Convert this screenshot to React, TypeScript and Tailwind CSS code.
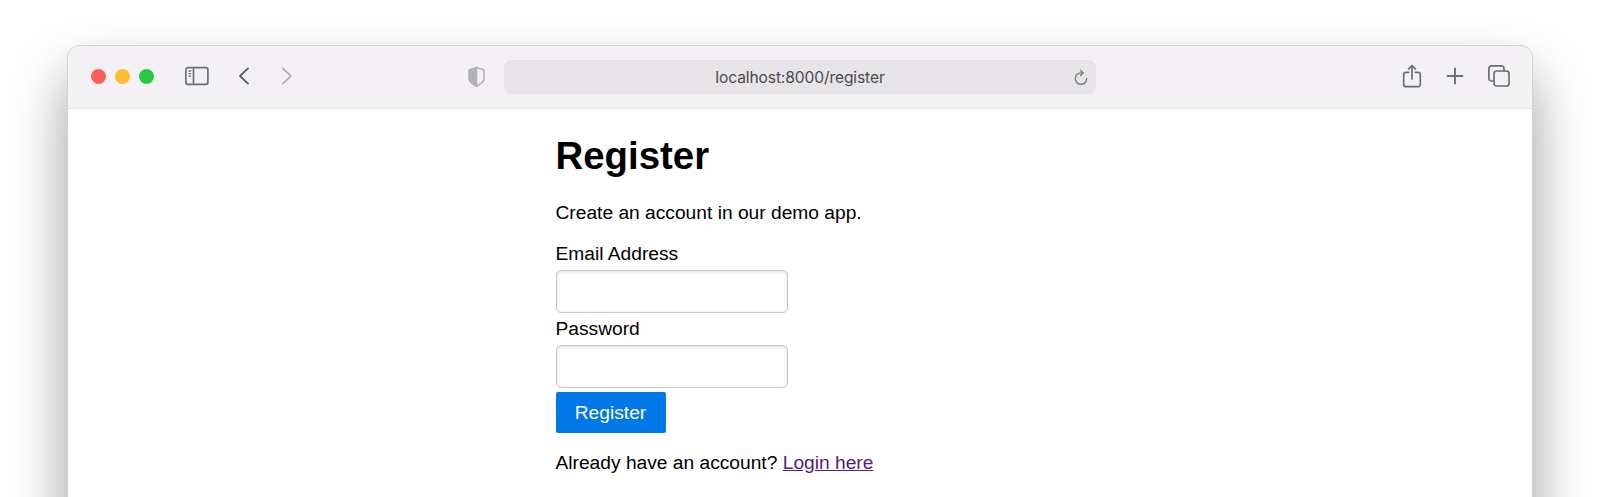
import React from "react";

const stroke = {
  fill: "none",
  stroke: "currentColor",
  strokeLinecap: "round" as const,
  strokeLinejoin: "round" as const,
};

function SidebarIcon() {
  return (
    <svg width="24" height="20" viewBox="0 0 24 20" {...stroke} strokeWidth="1.7" className="text-[#6f6e70]">
      <rect x="0.9" y="1.7" width="22" height="16.600" rx="2" />
      <path d="M8.500 1.700v16.600" />
      <path d="M4 5h1.700M4 7.600h1.700M4 10.200h1.700" strokeWidth="1.3" />
    </svg>
  );
}

function Chevron({ forward = false }: { forward?: boolean }) {
  return (
    <svg
      width="12"
      height="20"
      viewBox="0 0 12 20"
      {...stroke}
      strokeWidth="1.9"
      className={forward ? "text-[#b5b3b7]" : "text-[#5f5e60]"}
    >
      <path d={forward ? "M1.800 2.400 9.800 10 1.800 17.600" : "M10 2.400 2 10 10 17.600"} />
    </svg>
  );
}

function ShieldIcon() {
  return (
    <svg width="18" height="22" viewBox="0 0 18 22" {...stroke} strokeWidth="1.6" className="text-[#b3b1b4]">
      <path d="M8.500 1.400C6.500 2.500 4 3.300 1.600 3.600 1.200 3.700 1 4 1 4.400v8.100c0 3.800 4.200 6 7.500 7.700z" fill="currentColor" />
      <path d="M8.500 1.400c2 1.100 4.500 1.900 6.900 2.200.4.1.6.400.6.800v8.100c0 3.800-4.200 6-7.500 7.700" />
    </svg>
  );
}

function ReloadIcon() {
  return (
    <svg width="14" height="17" viewBox="0 0 14 17" {...stroke} strokeWidth="1.400" className="text-[#7d7c7e]">
      <path d="M12.700 9.600A5.700 5.700 0 1 1 7 3.900h2" />
      <path d="M6.600 1.400 9.200 3.900 6.600 6.500" />
    </svg>
  );
}

function ShareIcon() {
  return (
    <svg width="20" height="24" viewBox="0 0 20 24" {...stroke} strokeWidth="1.700" className="text-[#6f6e70]">
      <path d="M6.700 8.300H4a2.300 2.300 0 0 0-2.300 2.300v9.800A2.300 2.300 0 0 0 4 22.700h12a2.300 2.300 0 0 0 2.300-2.300v-9.800A2.300 2.300 0 0 0 16 8.300h-2.700" />
      <path d="M10 15V1.500M6.600 4.900 10 1.500l3.400 3.400" />
    </svg>
  );
}

function PlusIcon() {
  return (
    <svg width="18" height="18" viewBox="0 0 18 18" {...stroke} strokeWidth="1.900" className="text-[#6f6e70]">
      <path d="M9 1.500v15M1.500 9h15" />
    </svg>
  );
}

function TabsIcon() {
  return (
    <svg width="22" height="22" viewBox="0 0 22 22" {...stroke} strokeWidth="1.700" className="text-[#6f6e70]">
      <rect x="6" y="6" width="15" height="15" rx="2.600" />
      <path d="M6 16H3.500A2.600 2.600 0 0 1 .9 13.400V3.500A2.600 2.600 0 0 1 3.500.9h9.900A2.600 2.600 0 0 1 16 3.500V5.800" />
    </svg>
  );
}

function Toolbar() {
  return (
    <header className="flex h-[63px] items-center border-b border-[#e3e1e4] bg-[#f3f1f4] pl-[23px] pr-[22px]">
      <div className="flex w-[377px] shrink-0 items-center">
        <div className="flex gap-[9px] pb-px">
          <span className="size-[15px] rounded-full bg-[#ff5f57]" />
          <span className="size-[15px] rounded-full bg-[#febc2e]" />
          <span className="size-[15px] rounded-full bg-[#28c840]" />
        </div>
        <div className="ml-[31px] flex items-center pb-[2px]">
          <SidebarIcon />
        </div>
        <div className="ml-[29px] flex gap-[31px] pb-[2px]">
          <Chevron />
          <Chevron forward />
        </div>
      </div>
      <div className="pb-px">
        <ShieldIcon />
      </div>
      <div className="ml-[18px] flex h-[34px] w-[592px] items-center rounded-[7px] bg-[#e6e4e7] pr-[8px]">
        <span className="ml-[22px] flex-1 pt-[2px] text-center font-['Inter'] text-[15.6px] leading-5 tracking-[-0.12px] text-[#4c4a4e]">
          localhost:8000/register
        </span>
        <ReloadIcon />
      </div>
      <div className="ml-auto flex items-center pb-[2px]">
        <ShareIcon />
        <div className="ml-[24px]">
          <PlusIcon />
        </div>
        <div className="ml-[24px]">
          <TabsIcon />
        </div>
      </div>
    </header>
  );
}

function Field({ label, type, id }: { label: string; type: string; id: string }) {
  return (
    <div className="flex h-[74.500px] flex-col items-start">
      <label htmlFor={id} className="h-[27px]">
        {label}
      </label>
      <input
        id={id}
        type={type}
        className="h-[43px] w-[232px] rounded-[5px] border border-[#c9c9c9] bg-white px-3 shadow-[inset_0_1px_4px_#dddddd] outline-none"
      />
    </div>
  );
}

export default function App() {
  return (
    <div className="h-[497px] overflow-hidden bg-white px-[68px] pt-[46px]">
      <div className="h-[700px] overflow-hidden rounded-[12px] bg-white shadow-[0_0_0_1px_#d4d3d5,0_30px_56px_rgba(0,0,0,0.4)]">
        <Toolbar />
        <main className="ml-[487.500px] w-[490px] pt-[25px] font-['Liberation_Sans',sans-serif] text-[19.2px] leading-[22px] text-black">
          <h1 className="text-[38.4px] font-bold leading-[44px]">Register</h1>
          <p className="mt-[24px]">Create an account in our demo app.</p>
          <form className="mt-[19px]" onSubmit={(e) => e.preventDefault()}>
            <Field label="Email Address" type="email" id="email" />
            <Field label="Password" type="password" id="password" />
            <button type="submit" className="h-[41px] w-[110px] rounded-[2px] bg-[#0078e7] text-white">
              Register
            </button>
          </form>
          <p className="mt-[19px]">
            Already have an account?{" "}
            <a href="#login" className="text-[#551a8b] underline">
              Login here
            </a>
          </p>
        </main>
      </div>
    </div>
  );
}
